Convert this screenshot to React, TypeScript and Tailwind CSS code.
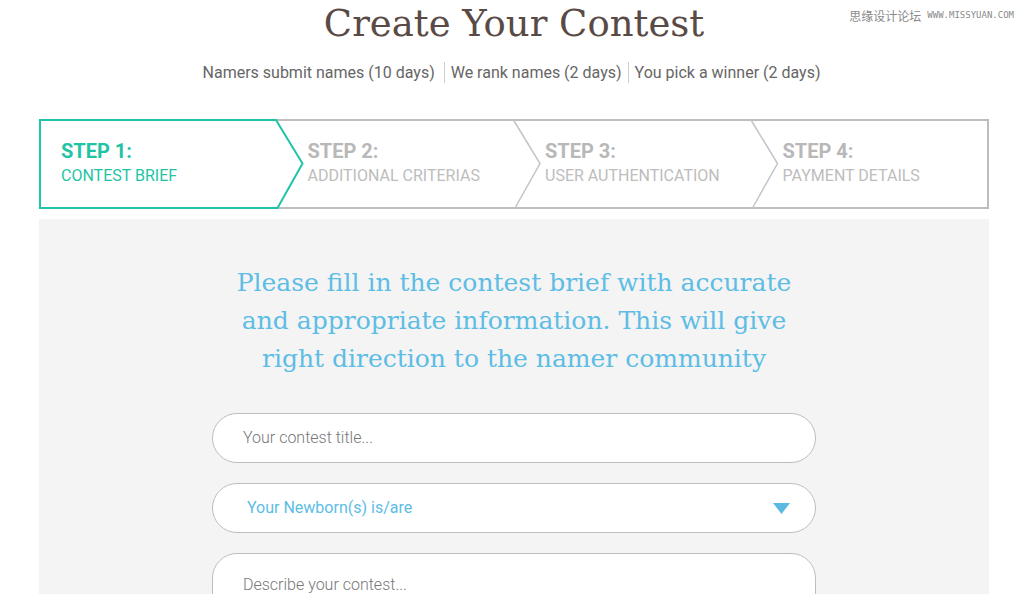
import React from 'react'

const steps = [
  { n: 'STEP 1:', label: 'CONTEST BRIEF', active: true },
  { n: 'STEP 2:', label: 'ADDITIONAL CRITERIAS', active: false },
  { n: 'STEP 3:', label: 'USER AUTHENTICATION', active: false },
  { n: 'STEP 4:', label: 'PAYMENT DETAILS', active: false },
]

function StepsBar() {
  return (
    <div className="relative h-[90px] w-[950px]">
      {/* borders + chevrons */}
      <svg className="absolute inset-0" width="950" height="90" viewBox="0 0 950 90">
        <rect x="1" y="1" width="948" height="88" fill="white" stroke="#bdbdbd" strokeWidth="2" />
        <polyline points="474.5,1 501,44.5 476,89" fill="none" stroke="#c4c4c4" strokeWidth="1.5" />
        <polyline points="712,1 738.5,44.5 713.5,89" fill="none" stroke="#c4c4c4" strokeWidth="1.5" />
        <polygon points="1,1 237,1 263.5,44.5 238.5,89 1,89" fill="white" stroke="#1fc4a5" strokeWidth="2" />
      </svg>
      <div className="relative grid grid-cols-4 h-full">
        {steps.map((s, i) => (
          <div key={i} className={`pt-[20px] ${i === 0 ? 'pl-[22px]' : 'pl-[31px]'}`}>
            <div className={`text-[20px] leading-[24px] font-bold ${s.active ? 'text-[#1fc4a5]' : 'text-[#b8b8b8]'}`}>
              {s.n}
            </div>
            <div className={`mt-[3px] text-[16px] leading-[20px] ${s.active ? 'text-[#1fc4a5]' : 'text-[#bdbdbd]'}`}>
              {s.label}
            </div>
          </div>
        ))}
      </div>
    </div>
  )
}

export default function App() {
  return (
    <div className="relative min-h-[594px] bg-white overflow-hidden" style={{ fontFamily: 'Roboto, "Noto Sans", sans-serif' }}>
      {/* watermark */}
      <div className="absolute top-[7px] right-[10px] flex items-center gap-[6px] text-[#8a8a8a]">
        <span className="text-[12px]" style={{ fontFamily: '"Noto Sans CJK SC", sans-serif' }}>思缘设计论坛</span>
        <span className="text-[9px]" style={{ fontFamily: '"DejaVu Sans Mono", monospace' }}>WWW.MISSYUAN.COM</span>
      </div>

      <div className="ml-[39px] w-[950px]">
        <h1
          className="pt-[2px] text-center text-[37px] leading-[44px] text-[#5a4a46]"
          style={{ fontFamily: '"DejaVu Serif", serif' }}
        >
          Create Your Contest
        </h1>

        <div className="mt-[16px] flex justify-center pr-[5px] text-[16px] leading-[21px] text-[#666666]">
          <span className="pr-[9px]">Namers submit names (10 days)</span>
          <span className="border-l border-[#cccccc] px-[6px]">We rank names (2 days)</span>
          <span className="border-l border-[#cccccc] pl-[6px]">You pick a winner (2 days)</span>
        </div>

        <div className="mt-[36px]">
          <StepsBar />
        </div>

        <div className="mt-[10px] bg-[#f4f4f4] pt-[45px] pb-[40px] min-h-[400px]">
          <p
            className="mx-auto w-[600px] text-center text-[25px] leading-[38px] text-[#5dbde5]"
            style={{ fontFamily: '"DejaVu Serif", serif' }}
          >
            Please fill in the contest brief with accurate
            <br />
            and appropriate information. This will give
            <br />
            right direction to the namer community
          </p>

          <div className="mx-auto mt-[35px] flex w-[604px] flex-col gap-[20px]">
            <div className="flex h-[50px] items-center rounded-full border border-[#bdbdbd] bg-white pl-[30px] text-[16px] font-light text-[#777777]">
              Your contest title...
            </div>
            <div className="flex h-[50px] items-center justify-between rounded-full border border-[#bdbdbd] bg-white pl-[34px] pr-[25px] text-[16px] text-[#5dbde5]">
              <span>Your Newborn(s) is/are</span>
              <svg width="17" height="11" viewBox="0 0 17 11">
                <polygon points="0,0 17,0 8.5,11" fill="#5bb9e2" />
              </svg>
            </div>
            <div className="h-[120px] rounded-[25px] border border-[#bdbdbd] bg-white pl-[30px] pt-[19px] text-[16px] font-light text-[#777777]">
              Describe your contest...
            </div>
          </div>
        </div>
      </div>
    </div>
  )
}
